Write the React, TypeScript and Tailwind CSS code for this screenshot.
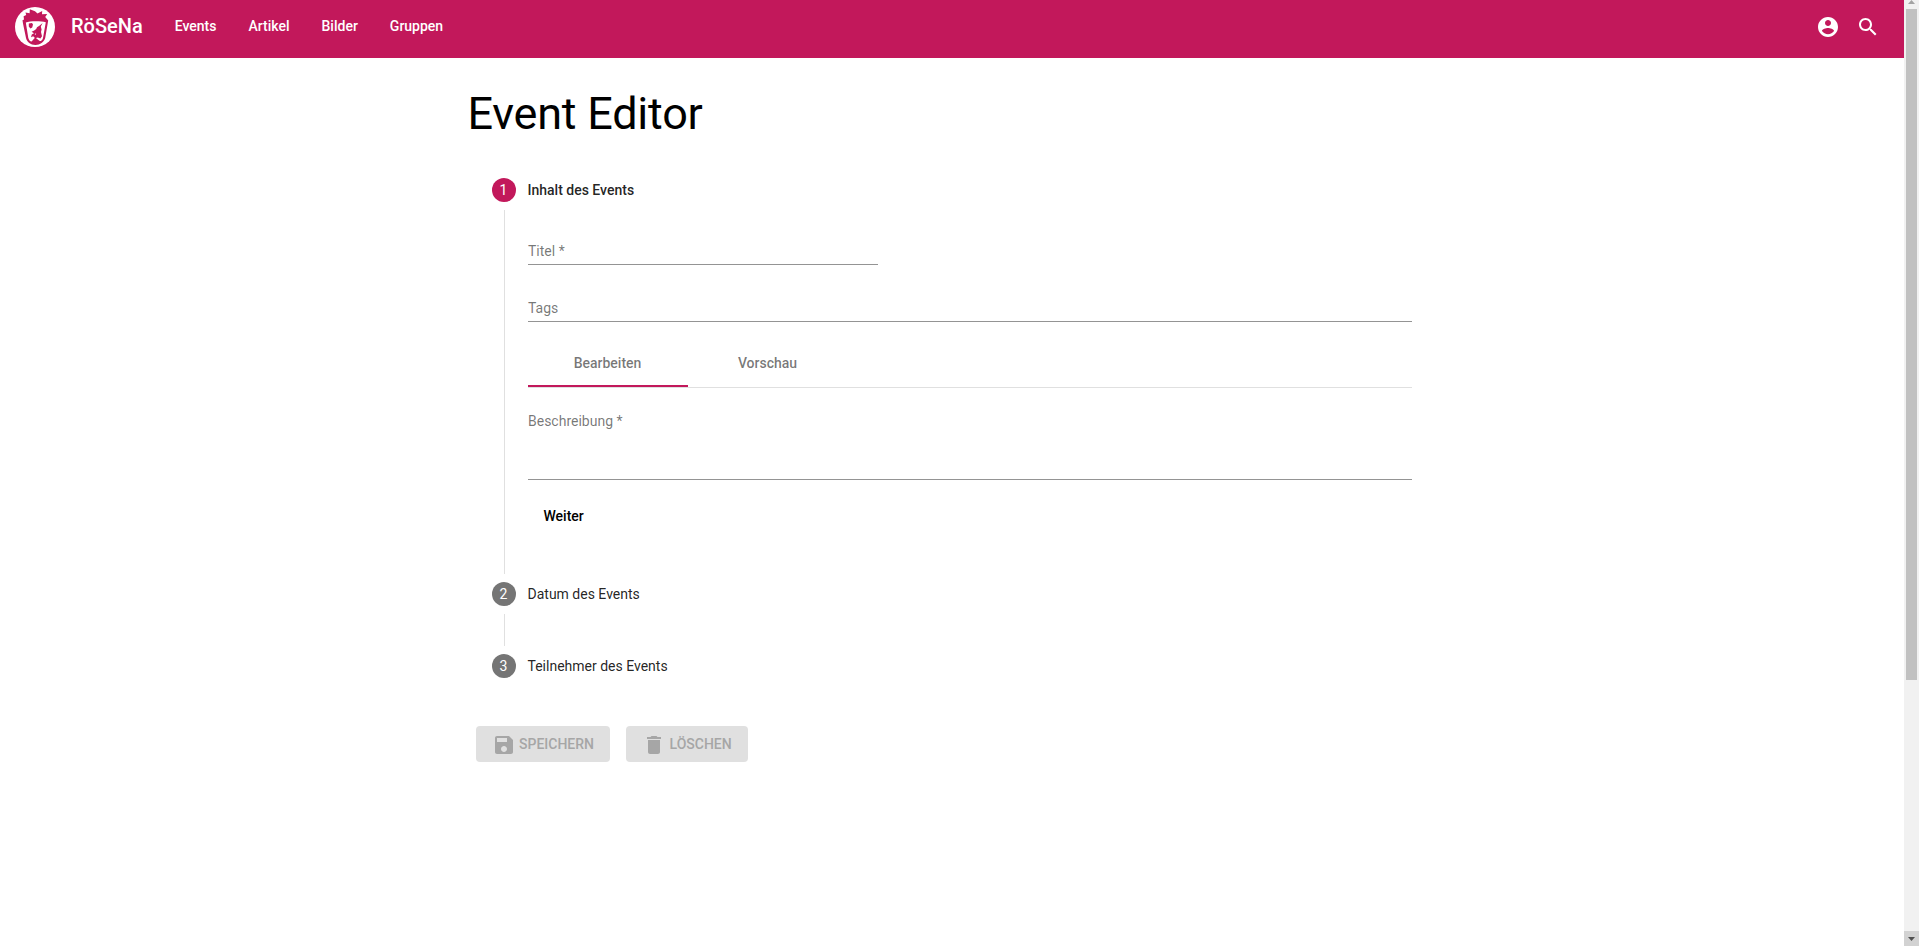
import type { ReactNode } from 'react';

function Icon({ d, className = '' }: { d: string; className?: string }) {
  return (
    <svg viewBox="0 0 24 24" className={`size-6 shrink-0 fill-current ${className}`} aria-hidden="true">
      <path d={d} />
    </svg>
  );
}

const ACCOUNT =
  'M12 2C6.48 2 2 6.48 2 12s4.48 10 10 10 10-4.48 10-10S17.52 2 12 2zm0 3c1.66 0 3 1.34 3 3s-1.34 3-3 3-3-1.34-3-3 1.34-3 3-3zm0 14.2c-2.5 0-4.71-1.28-6-3.22.03-1.99 4-3.08 6-3.08 1.99 0 5.97 1.09 6 3.08-1.29 1.94-3.5 3.22-6 3.22z';
const SEARCH =
  'M15.5 14h-.79l-.28-.27C15.41 12.59 16 11.11 16 9.5 16 5.91 13.09 3 9.5 3S3 5.91 3 9.5 5.91 16 9.5 16c1.61 0 3.09-.59 4.23-1.57l.27.28v.79l5 4.99L20.49 19l-4.99-5zm-6 0C7.01 14 5 11.99 5 9.5S7.01 5 9.5 5 14 7.01 14 9.5 11.99 14 9.5 14z';
const SAVE =
  'M17 3H5c-1.11 0-2 .9-2 2v14c0 1.1.89 2 2 2h14c1.1 0 2-.9 2-2V7l-4-4zm-5 16c-1.66 0-3-1.34-3-3s1.34-3 3-3 3 1.34 3 3-1.34 3-3 3zm3-10H5V5h10v4z';
const DELETE = 'M6 19c0 1.1.9 2 2 2h8c1.1 0 2-.9 2-2V7H6v12zM19 4h-3.5l-1-1h-5l-1 1H5v2h14V4z';

function Logo() {
  return (
    <svg viewBox="0 0 40 40" className="size-10 shrink-0" aria-hidden="true">
      <circle cx="20" cy="20" r="20" fill="#fff" />
      <path
        fill="#c2185b"
        d="M14.8 2.2 20 4.3 22.5 6.6 27.2 4 27 7.2 32.2 7 30.2 10 32.4 12.4 33.2 13.6 32.6 17 30.2 31C29 35 25 37.8 20.5 38 15.5 37.8 12 35 11 31L8 16.5 7.5 13.2 9 12.5 8.6 9.3 11.2 8 10.5 5.5 14.6 6.3Z"
      />
      <path
        fill="#fff"
        d="M10.8 15.5C15 13.8 26 13.8 30.8 15.3L28 31C27.2 33.9 25.4 34.5 24.4 33.8L20.2 30.6 16.6 34.4C14.8 34.4 13.9 33 13.3 31Z"
      />
      <path
        fill="#c2185b"
        d="M13.8 16.6 17 16 18 17.6 17.2 20.6 15.4 21.6 13.8 19.6ZM27.6 16 25.8 19.4 26.6 22.6 26 25 27 29.2 25.4 31.6 22.8 30.4 20.2 31.2 18.2 29.2 16 30.2 16.8 27.4 19 26.2 16.6 24.8 19.2 23.4 21.2 22 22 20.2 24.4 18.8Z"
      />
      <path fill="#fff" d="M19.6 27 21.2 26.2 20.6 28Z" />
    </svg>
  );
}

function StepHeader({ n, active, children }: { n: number; active?: boolean; children: ReactNode }) {
  return (
    <div className="flex h-[72px] items-center px-6">
      <span
        className={`mr-3 flex size-6 items-center justify-center rounded-full text-sm text-white ${
          active ? 'bg-[#c2185b]' : 'bg-[#757575]'
        }`}
      >
        {n}
      </span>
      <span className={`text-sm text-black/87 ${active ? 'font-medium' : ''}`}>{children}</span>
    </div>
  );
}

function Field({ label, className }: { label: string; className: string }) {
  return (
    <div className={`border-b border-[#949494] pl-[0.5px] text-sm leading-4 text-black/54 ${className}`}>{label}</div>
  );
}

function ActionButton({ icon, children }: { icon: string; children: ReactNode }) {
  return (
    <button className="flex h-9 items-center rounded bg-[#e0e0e0] px-4 text-sm font-medium text-[#a6a6a6]">
      <Icon d={icon} className="mt-0.5 mr-[3.5px]" />
      {children}
    </button>
  );
}

export default function App() {
  return (
    <div className="flex h-[946px] overflow-hidden bg-white font-['Roboto',sans-serif] text-black">
      <div className="flex min-w-0 flex-1 flex-col">
        <header className="flex h-[58px] shrink-0 items-start bg-[#c2185b] pt-[7px] pr-6 pl-[15px] text-white">
          <Logo />
          <span className="ml-4 pt-[5px] text-xl leading-7 font-medium">RöSeNa</span>
          <nav className="ml-8 flex gap-8 pt-[9px] text-sm leading-5 font-medium">
            <a>Events</a>
            <a>Artikel</a>
            <a>Bilder</a>
            <a>Gruppen</a>
          </nav>
          <div className="ml-auto flex gap-4 pt-2">
            <Icon d={ACCOUNT} />
            <Icon d={SEARCH} />
          </div>
        </header>

        <main className="ml-[467.5px] w-[968px]">
          <h1 className="pt-8 text-[45px] leading-[48px] font-normal tracking-[-0.005em]">Event Editor</h1>

          <section className="pt-4">
            <StepHeader n={1} active>
              Inhalt des Events
            </StepHeader>
            <div className="flex h-[332px]">
              <div className="-my-4 ml-9 w-px bg-[#e0e0e0]" />
              <div className="ml-[23px] w-[884px] pt-[17px]">
                <Field label="Titel *" className="h-[22px] w-[350px]" />
                <Field label="Tags" className="mt-[35px] h-[22px]" />
                <div className="mt-[17px] flex h-[49px] border-b border-[#e0e0e0] text-sm font-medium text-black/54">
                  <div className="flex w-40 items-center justify-center border-b-2 border-[#c2185b] pt-0.5">
                    Bearbeiten
                  </div>
                  <div className="flex w-40 items-center justify-center">Vorschau</div>
                </div>
                <Field label="Beschreibung *" className="mt-[25px] h-[67px]" />
                <button className="mt-[18px] h-9 px-4 text-sm font-medium">Weiter</button>
              </div>
            </div>
            <StepHeader n={2}>Datum des Events</StepHeader>
            <div className="relative">
              <div className="absolute -top-4 left-9 h-8 w-px bg-[#e0e0e0]" />
            </div>
            <StepHeader n={3}>Teilnehmer des Events</StepHeader>
          </section>

          <div className="flex gap-4 pt-6 pl-2">
            <ActionButton icon={SAVE}>SPEICHERN</ActionButton>
            <ActionButton icon={DELETE}>LÖSCHEN</ActionButton>
          </div>
        </main>
      </div>

      <div className="flex w-[15px] shrink-0 flex-col items-center bg-[#f1f1f1]">
        <svg viewBox="0 0 15 9" className="h-[9px] w-[15px] shrink-0" aria-hidden="true">
          <path d="M7.5 0 11 4H4Z" fill="#a3a3a3" />
        </svg>
        <div className="h-[671px] w-[11px] bg-[#c1c1c1]" />
        <div className="mt-auto flex h-[15px] w-full items-center justify-center bg-[#d2d2d2]">
          <svg viewBox="0 0 7 4" className="h-1 w-[7px]" aria-hidden="true">
            <path d="M0 0H7L3.5 4Z" fill="#505050" />
          </svg>
        </div>
      </div>
    </div>
  );
}
